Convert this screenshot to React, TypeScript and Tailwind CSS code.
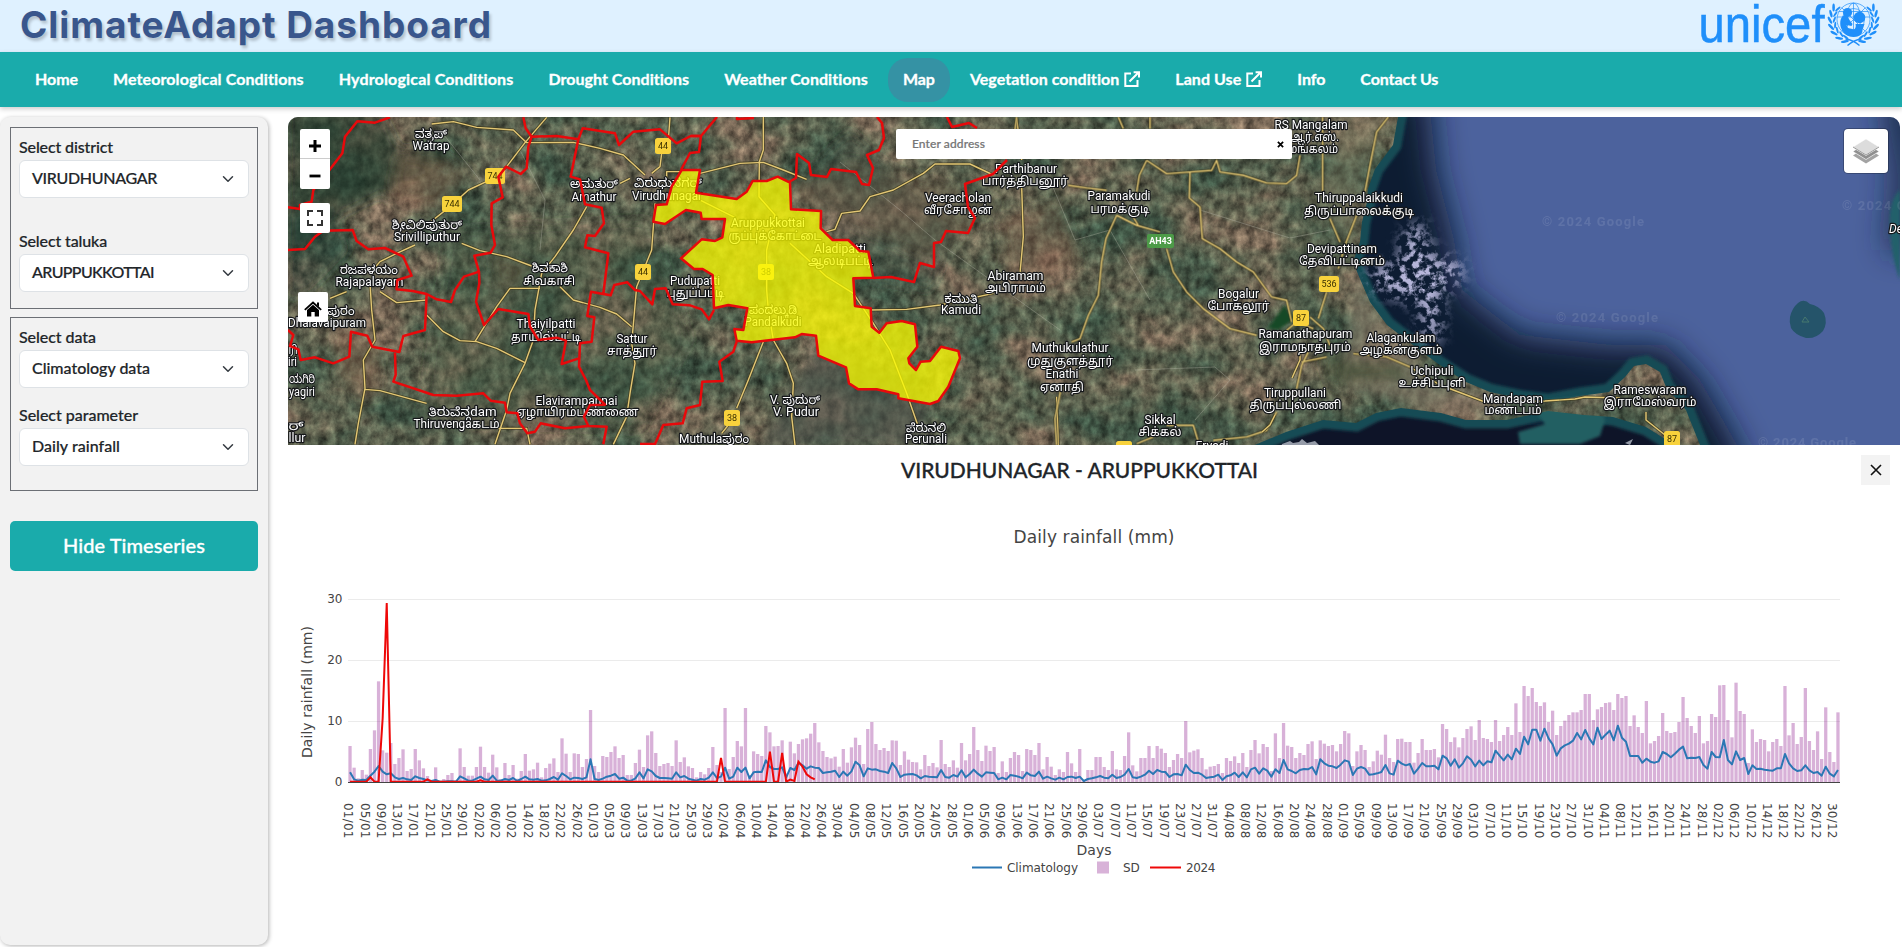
import { useLayoutEffect, useRef, type ReactNode } from "react";

/* Text set to a fixed measure by adjusting its tracking. */
function Fit({ w, children, className = "" }: { w: number; children: string; className?: string }) {
  const ref = useRef<HTMLSpanElement>(null);
  useLayoutEffect(() => {
    const el = ref.current;
    if (!el) return;
    el.style.letterSpacing = "0px";
    const natural = el.getBoundingClientRect().width;
    el.style.letterSpacing = `${(w - natural) / children.length}px`;
  }, [w, children]);
  return (
    <span ref={ref} className={`inline-block whitespace-nowrap ${className}`}>
      {children}
    </span>
  );
}

function ExternalIcon() {
  return (
    <svg viewBox="0 0 16 16" className="ml-[5px] mt-px h-[16px] w-[16px]" fill="none" stroke="currentColor" strokeWidth="2">
      <path d="M7 2.5H1.3V15H13.5V9" />
      <path d="M5.5 10.5 14 2M9.6 1.2H15V6.6" />
    </svg>
  );
}

const nav = [
  { t: "Home", w: 43 },
  { t: "Meteorological Conditions", w: 191 },
  { t: "Hydrological Conditions", w: 175 },
  { t: "Drought Conditions", w: 141 },
  { t: "Weather Conditions", w: 144 },
  { t: "Map", w: 32, active: true },
  { t: "Vegetation condition", w: 150, ext: true },
  { t: "Land Use", w: 66, ext: true },
  { t: "Info", w: 28 },
  { t: "Contact Us", w: 78 },
];

function Laurel() {
  const leaves = [
    [-8, 18, 72], [-13, 15, 52], [-17.5, 10.5, 34], [-20, 5, 16], [-21, -1, 0], [-20, -7, -14], [-17.5, -12.5, -28],
  ];
  return (
    <g>
      {leaves.map(([x, y, r], i) => (
        <g key={i} transform={`translate(${x} ${y}) rotate(${-r})`}>
          <ellipse cx="-2.4" cy="-1" rx="1.3" ry="4" transform="rotate(-28)" />
          <ellipse cx="1.6" cy="-1" rx="1" ry="3.4" transform="rotate(20)" />
        </g>
      ))}
    </g>
  );
}

function UnicefLogo() {
  return (
    <svg viewBox="1690 0 210 52" className="h-[52px] w-[210px]" fill="#1f8ffa">
      <text
        x="1698.500"
        y="41.500"
        fontSize="52"
        stroke="#1f8ffa"
        strokeWidth=".5"
        textLength="126"
        lengthAdjust="spacingAndGlyphs"
        className="font-['Liberation_Sans']"
      >
        unicef
      </text>
      <g transform="translate(1853.500 21)">
        <g fill="none" stroke="#1f8ffa" strokeWidth=".7">
          <circle r="16.500" cy="-1.500" />
          <circle r="11" cy="-1.500" />
          <ellipse rx="7" ry="16.500" cy="-1.500" />
          <path d="M0-18V15M-17-4H17M-15-9.500H15M-12-13.500 12 10.500M12-13.500-12 10.500" />
        </g>
        <circle cx="-6" cy="-8.500" r="4.600" />
        <circle cx="6" cy="-3.500" r="5.800" />
        <path d="M-9-6C-14-4-14 4-12 8c2 5 7 8 12 8 6 0 9-3 9-7l2-6H2C3 7 1 9-1 8l-5-1-1-3 5 1 1-2-3-4-2-4Z" />
        <Laurel />
        <g transform="scale(-1 1)"><Laurel /></g>
        <path d="M-8 18Q0 19 6 24.500M8 18Q0 19-6 24.500" fill="none" stroke="#1f8ffa" strokeWidth="1.400" />
      </g>
    </svg>
  );
}

function Header() {
  return (
    <header className="flex h-[52px] shrink-0 items-center justify-between bg-[#dff1ff] pl-5 pr-[2px]">
      <h1 className="-mt-[4px] font-['Inter'] text-[37px] font-bold leading-none text-[#39568c] [text-shadow:2px_3px_3px_rgba(0,0,0,0.2)]">
        <Fit w={472}>ClimateAdapt Dashboard</Fit>
      </h1>
      <UnicefLogo />
    </header>
  );
}

function Nav() {
  return (
    <nav className="flex h-[55px] shrink-0 items-center gap-[5px] bg-[#1aabab] pl-5 text-[16px] font-bold text-white shadow-[0_2px_5px_rgba(0,0,0,0.2)]">
      {nav.map((n) => (
        <a key={n.t} className={`flex h-11 items-center rounded-[20px] px-[15px] pb-[2px] ${n.active ? "bg-[#3592a4]" : ""}`}>
          <Fit w={n.w} className="[-webkit-text-stroke:0.3px_white]">{n.t}</Fit>
          {n.ext && <ExternalIcon />}
        </a>
      ))}
    </nav>
  );
}

function Field({ label, lw, value, vw }: { label: string; lw: number; value: string; vw: number }) {
  return (
    <div className="flex flex-col">
      <div className="flex h-[27px] items-center text-[16px] font-medium"><Fit w={lw}>{label}</Fit></div>
      <div className="flex h-[38px] items-center justify-between rounded-md border border-[#dee2e6] bg-white pb-[2px] pl-3 pr-[14px] text-[16px] font-medium">
        <Fit w={vw}>{value}</Fit>
        <svg viewBox="0 0 16 16" className="mt-px h-3 w-3" fill="none" stroke="#343a40" strokeWidth="2" strokeLinecap="round" strokeLinejoin="round">
          <path d="m2 5 6 6 6-6" />
        </svg>
      </div>
    </div>
  );
}

function Sidebar() {
  return (
    <aside className="flex h-[828px] w-[268px] shrink-0 flex-col rounded-[10px] bg-[#f2f2f2] px-[10px] pt-[10px] text-[#212529] shadow-[1px_1px_4px_rgba(0,0,0,0.3)]">
      <section className="flex h-[182px] flex-col gap-[29px] border border-[#6c6f75] px-2 pt-[5px] [-webkit-text-stroke:0.2px_#212529]">
        <Field label="Select district" lw={94} value="VIRUDHUNAGAR" vw={125} />
        <Field label="Select taluka" lw={88} value="ARUPPUKKOTTAI" vw={122} />
      </section>
      <section className="mt-2 flex h-[174px] flex-col gap-[13px] border border-[#6c6f75] px-2 pt-[5px] [-webkit-text-stroke:0.2px_#212529]">
        <Field label="Select data" lw={77} value="Climatology data" vw={118} />
        <Field label="Select parameter" lw={119} value="Daily rainfall" vw={88} />
      </section>
      <button className="mt-[30px] flex h-[50px] items-center justify-center rounded-[5px] bg-[#1aabab] pb-[3px] text-[20px] font-medium text-white [-webkit-text-stroke:0.3px_white]">
        <Fit w={142}>Hide Timeseries</Fit>
      </button>
    </aside>
  );
}

/* ---------- Map ---------- */

type Label = [string, number, number, number];
const labels: Label[] = [
  ["ವತ್ರಪ್", 431, 133.5, 32], ["Watrap", 431, 146, 37],
  ["ಅಮತುರ್", 594, 184, 48], ["Amathur", 594, 196.5, 45],
  ["ವಿರುಧುನಗರ್", 668, 183, 68], ["Virudhunagar", 667, 196, 70],
  ["ಶ್ರೀವಿಲಿಪುತುರ್", 427, 225, 70], ["Srivilliputhur", 427, 236.5, 66],
  ["ರಜಪಳಯಂ", 369, 270, 58], ["Rajapalayam", 369.5, 281.5, 68],
  ["ಶಿವಕಾಶಿ", 550, 268, 36], ["சிவகாசி", 549, 281, 52],
  ["ಪುರಂ", 341, 311, 27], ["Dhalavaipuram", 327, 322.5, 78],
  ["Thaiyilpatti", 546, 324, 59], ["தாயில்பட்டி", 546, 336.5, 70],
  ["Sattur", 632, 338.5, 31], ["சாத்தூர்", 632, 350.5, 50],
  ["ரி", 293, 350, 9], ["iri", 292.5, 361.5, 9],
  ["ಯಗಿರಿ", 302, 379, 26], ["yagiri", 302, 391.5, 26],
  ["ತಿರುವೆನ್ಗdam", 462.5, 411.5, 68], ["Thiruvengaகடம்", 456.5, 423.5, 86],
  ["Elavirampannai", 576.5, 400.5, 82], ["ஏழாயிரம்பண்ணை", 577.5, 412, 122],
  ["ರ್", 296, 426, 15], ["llur", 297, 438, 17], ["Muthulaಪುರಂ", 714, 439, 70],
  ["Pudupatti", 695, 281, 50], ["புதுப்பட்டி", 695.5, 293, 58],
  ["Aruppukkottai", 768, 223, 74], ["ருப்புக்கோட்டை", 775, 235.5, 93],
  ["Aladipatti", 840, 249, 52], ["ஆலடிபட்டி", 840.5, 261, 65],
  ["ಪಂದಲ್ಕುಡಿ", 773, 310, 48], ["Pandalkudi", 773, 322, 57],
  ["V. ಪುದುರ್", 795, 400, 50], ["V. Pudur", 796, 412, 46],
  ["ಪೆರುನಲಿ", 926, 428, 40], ["Perunali", 926, 439, 42],
  ["ಕಮುತಿ", 961, 299, 33], ["Kamudi", 961, 310, 40],
  ["Veeracholan", 958, 198, 66], ["வீரசோழன்", 958, 210, 68],
  ["Parthibanur", 1026, 169, 62], ["பார்த்திபனூர்", 1025, 181, 86],
  ["Abiramam", 1015.5, 276, 56], ["அபிராமம்", 1015.5, 288, 61],
  ["Paramakudi", 1119, 196, 63], ["பரமக்குடி", 1120, 208.5, 59],
  ["RS Mangalam", 1311, 125, 73], ["ஆர்.எஸ்.", 1315, 137, 48], ["மங்கலம்", 1313, 148.5, 50],
  ["Thiruppalaikkudi", 1359, 198, 88], ["திருப்பாலைக்குடி", 1359, 211, 110],
  ["Devipattinam", 1342, 249, 70], ["தேவிபட்டினம்", 1342, 261, 86],
  ["Bogalur", 1238.5, 294, 41], ["போகலூர்", 1238.5, 306, 62],
  ["Ramanathapuram", 1305.5, 334, 94], ["இராமநாதபுரம்", 1305, 346.5, 92],
  ["Alagankulam", 1401, 338, 69], ["அழகன்குளம்", 1401, 350, 83],
  ["Uchipuli", 1432, 371, 43], ["உச்சிப்புளி", 1432, 383, 67],
  ["Mandapam", 1513, 398.5, 60], ["மண்டபம்", 1513, 410, 57],
  ["Rameswaram", 1650, 390, 73], ["இராமேஸ்வரம்", 1650, 402, 93],
  ["Tiruppullani", 1295, 393, 62], ["திருப்புல்லணி", 1295.5, 405, 92],
  ["Muthukulathur", 1070, 348, 77], ["முதுகுளத்தூர்", 1070, 360.5, 86],
  ["Enathi", 1062, 374, 33], ["ஏனாதி", 1062, 386.5, 44],
  ["Sikkal", 1160, 420, 31], ["சிக்கல்", 1160, 432, 43], ["Ervadi", 1212, 446, 33],
];

const shields: [string, number, number][] = [
  ["744", 495, 176], ["744", 452, 204], ["44", 663, 146], ["44", 643, 272], ["38", 766, 272],
  ["38", 732, 418], ["536", 1329, 284], ["87", 1301, 318], ["87", 1672, 439], ["", 1124, 449],
];

const T5 = "translate(280 110) scale(.33333)";
const T6 = "translate(640 150) scale(.33333)";
const T12 = "translate(1000 112) scale(.33333)";

const roadsWest =
  "M455 42 520 35 590 52 700 60 740 98 880 97 960 115 1030 135 1095 195M800 22 735 98 680 170 640 205 565 240 510 290 440 345M405 405 350 430 300 455 270 490M545 400 600 422 680 440 755 468M920 290 880 360 825 440 785 490 765 600 760 690 735 760 690 850 680 900 645 1003M840 530 880 570 960 592 1010 612 1055 650M270 520 275 600 285 690 250 750 255 835 235 940 225 1003M300 545 350 578 440 570M440 615 490 665 540 692 590 695 650 715 735 758M255 838 300 842 440 880M780 535 690 535 650 590 585 695M1170 22 1165 90M1145 130 1140 170 1115 190M1125 280 1115 420 1070 530 1055 700 1065 760 1050 850 1040 920 1000 1003M655 955 740 955 750 1003M150 565 200 545M1160 215V185H1200M1020 220 1050 205";
const roadsMid =
  "M370-100 370 0 358 35 357 140 405 195 380 300 380 420 385 480 400 570 440 640 460 700 455 800 465 885M180 70 240 55 300 40 370 37 430 60 500 88M370 575 325 690 290 775M265 825 245 850M560 245 585 238 605 190 660 183 690 140 760 120 850 70 885 42 990 42 1060 75M450 280 560 380 640 430 700 520 750 600 800 730 835 830M170 145 290 205M690 480 800 478 900 465 1060 430M1145 110 1150 260 1140 370M1145 30 1130-95M1250 740 1255 885";
const roadsEast =
  "M50 15 45 55M355 15 370 50M450 15V50M440 145 500 185 570 180 635 175 650 145 660 180 730 190 800 213 860 215 890 190 900 130M440 145 418 190 410 240M570 180 568 258 600 285 607 380 660 410 710 450 760 480 815 555 860 565 875 630M205 220 260 228 320 235M350 310 410 340 480 360M390 300 415 340M350 310 318 380 305 450 295 550 265 610 240 680 215 690M182 835 165 920 170 999M500 410 520 480 560 540 610 590 690 650 770 670M968 15V240M990 320 1020 390M1165 15 1130 60 1110 160 1095 240M1070 310 1035 400 1015 470M980 540 955 620M930 615 970 650 990 700M940 650 890 630 860 655M925 720 905 760 890 830M830 900 800 955 740 975 640 985M410 995 460 975M500 940H580L595 990M905 750 980 735M1060 725 1160 735 1230 765";
const roadsSea =
  "M1410 367 1440 385 1485 402 1545 401 1575 399 1585 397 1620 398M1646 412V420L1665 435M1300 348V360L1292 378M1275 415 1270 425 1262 432";

const land =
  "M280 100H1402L1398 117 1393 145 1375 169 1368 189 1367 202 1362 222 1360 242 1353 262 1360 279 1370 302 1387 325 1413 345 1437 363 1466 382 1490 392 1523 399 1548 402 1580 396 1609 392 1625 377 1634 366 1646 364 1660 372 1666 387 1686 410 1700 445 1690 450 1670 442 1646 427 1613 417 1584 415 1548 411 1507 420 1466 420 1441 413 1401 408 1376 413 1356 423 1323 420 1286 432 1250 447 280 450Z";

function Roads() {
  const all: [string, string | undefined, number][] = [
    [roadsWest, T5, 3], [roadsMid, T6, 3], [roadsEast, T12, 3], [roadsSea, undefined, 1],
  ];
  return (
    <g fill="none" strokeLinejoin="round">
      {all.map(([d, t, k], i) => (
        <g key={i} transform={t}>
          <path d={d} stroke="#3f3b20" strokeWidth={3 * k} opacity=".8" />
          <path d={d} stroke="#e3c774" strokeWidth={1.4 * k} />
        </g>
      ))}
    </g>
  );
}

function Boundaries() {
  return (
    <g fill="none" stroke="#e8090b" strokeLinejoin="round">
      <g transform={T5} strokeWidth="7.5">
        <path d="M330 22 285 38 232 34 195 80 187 130 150 178 100 240 95 275 60 285V297L24 292" />
        <path d="M24 420 75 417 105 380 130 362 218 360 230 393 265 418 315 414 370 440 395 497 352 510 350 538 398 543 440 552 470 568 513 576 525 540 552 500 597 485" />
        <path d="M730 22 737 55 755 80 745 110 740 175 722 192 678 170 655 200 668 262 635 280 634 345 645 405 632 428 583 437 597 485 598 520 588 575 612 645 655 597 745 612 750 650 775 690 830 683 858 692 845 762 897 745" />
        <path d="M755 80 830 78 895 88 908 55 1005 70 1017 105 1060 65 1140 58 1190 100 1232 78 1260 78" />
        <path d="M895 88 872 200 900 208 915 283 965 293 972 340 945 378 922 376 915 412 985 430 970 552 933 545 922 618 943 622 935 695 900 700 897 770 918 810 930 840 975 884 930 885 912 920 925 948 980 950 970 1003" />
        <path d="M970 552 992 556 1003 525 1042 517 1065 540 1080 543 1117 583 1125 537 1157 535 1178 583 1230 586 1265 598 1287 628 1302 600" />
        <path d="M440 552 435 660 370 678 358 726 277 710 262 677 213 665 208 740 160 760 105 742 62 750 55 718 30 708 40 675 24 660" />
        <path d="M345 728 347 795 340 815 460 855 530 857 610 850 632 872 675 878 680 907 712 910 720 940 742 970 765 965 782 940 855 955 925 948" />
      </g>
      <path transform={T6} strokeWidth="7.5" d="M0 882H45L70 825 128 820 140 775 180 765 187 695 248 693 238 635 280 605 290 575" />
      <g strokeWidth="2.5">
        <path d="M717 117 701 136 699 152 690 153 681 170M691 136H701M737 117V119L754 118" />
        <path d="M877 117 882 123 884 138 879 150 867 155 873 168 869 185 862 184 856 172 831 169 827 177 811 175 809 163 797 154 796 178 789 182" />
        <path d="M947 117 952 127 969 123 977 128" />
        <path d="M1007 160 993 174 965 184 968 207 975 218 968 233 946 231 941 242 934 243V267L920 263 914 282 891 277 873 278" />
      </g>
      <path
        transform={T6}
        strokeWidth="7.5"
        fill="#fafc00"
        fillOpacity=".76"
        d="M125 60H180L168 128 290 147 320 125 338 93H380L413 80 450 98 453 178 543 183 542 235 578 270H625L660 303 685 305 700 383 640 385 645 468 692 475 695 530 718 548 740 520 785 513 825 523 832 590 805 625 808 640 828 660 842 635 870 633 903 590 955 603 960 625 925 710 895 753 870 762 775 745V733L710 718H655L627 700 618 652 535 617 528 557 485 552 465 562 335 577 290 572 283 537 310 540 322 475 265 465 222 475 218 375 188 357H162L123 325 185 268 225 273 247 262 255 207H185L182 188 138 180 75 222 40 215 48 165 80 163 95 110Z"
      />
    </g>
  );
}

function SatelliteMap() {
  return (
    <svg viewBox="288 117 1612 328" className="h-full w-full">
      <defs>
        <filter id="ground" x="0" y="0" width="100%" height="100%" colorInterpolationFilters="sRGB">
          <feTurbulence type="fractalNoise" baseFrequency="0.014 0.02" numOctaves="6" seed="23" />
          <feColorMatrix values="2 0 0 0 -.5  2 0 0 0 -.5  2 0 0 0 -.5  0 0 0 0 1" />
          <feComponentTransfer result="tone">
            <feFuncR type="table" tableValues=".25 .31 .37 .43 .49" />
            <feFuncG type="table" tableValues=".33 .365 .39 .41 .42" />
            <feFuncB type="table" tableValues=".27 .295 .315 .335 .35" />
          </feComponentTransfer>
          <feTurbulence type="fractalNoise" baseFrequency="0.11 0.09" numOctaves="5" seed="4" />
          <feColorMatrix values=".65 0 0 0 .16  .65 0 0 0 .16  .65 0 0 0 .16  0 0 0 0 1" result="grain" />
          <feBlend in="grain" in2="tone" mode="overlay" />
          <feComposite in2="SourceGraphic" operator="in" />
        </filter>
        <filter id="clouds" x="0" y="0" width="100%" height="100%" colorInterpolationFilters="sRGB">
          <feGaussianBlur in="SourceGraphic" stdDeviation="8" result="soft" />
          <feTurbulence type="fractalNoise" baseFrequency="0.13" numOctaves="5" seed="8" />
          <feColorMatrix values="0 0 0 0 .72  0 0 0 0 .72  0 0 0 0 .86  5 0 0 0 -2.200" />
          <feComposite in2="soft" operator="in" />
        </filter>
        <filter id="b4"><feGaussianBlur stdDeviation="6" /></filter>
        <filter id="b1"><feGaussianBlur stdDeviation="1.5" /></filter>
        <filter id="b20" x="-30%" y="-30%" width="160%" height="160%"><feGaussianBlur stdDeviation="16" /></filter>
        <clipPath id="landClip"><path d={land} /></clipPath>
      </defs>

      <rect x="1200" y="117" width="700" height="328" fill="#4c629d" />
      <g filter="url(#b20)">
        <path d="M1340 90H1428L1436 170 1454 240 1462 290 1520 335 1610 345 1665 345 1700 380 1740 450 1750 500H1240Z" fill="#101a30" />
        <path d="M1884 90H1920V250L1888 250 1896 180Z" fill="#17263f" />
      </g>
      <path d="M1200 440 1330 425 1400 412 1520 425 1640 425 1680 460H1200Z" fill="#0e1428" />
      <path d={land} fill="none" stroke="#154c55" strokeWidth="17" filter="url(#b1)" />
      <path d="M1530 405 1545 400 1595 395 1605 420 1600 436 1580 444H1520L1518 432 1545 424Z" fill="#215e62" filter="url(#b1)" />
      <path d="M1790 317q2-9 8-14 6-5 12 1 9 2 14 9 4 10-1 18-7 8-17 7-11-3-15-10-2-6-1-11Z" fill="#25546a" />
      <path d="M1802 322l3-5 4 5z" fill="none" stroke="#47786f" />
      <path d="M1900 190q-12 10-10 40t10 50Z" fill="#22606a" filter="url(#b1)" />

      <g clipPath="url(#landClip)">
        <rect x="280" y="110" width="1450" height="345" fill="#556050" filter="url(#ground)" />
        <g filter="url(#b4)">
          <path d="M288 110 380 110 400 150 440 145 455 160 400 185 340 215 288 260Z" fill="#1d362c" opacity=".55" />
          <path d="M288 215 330 205 350 250 310 290 288 300Z" fill="#1d362c" opacity=".4" />
          <path d="M400 155 470 170 440 210 390 200Z M335 330 380 340 375 400 340 380Z M490 255 540 270 500 290Z" fill="#94674d" opacity=".35" />
          <path d="M450 230 650 220 690 340 640 430 420 420Z" fill="#3f5541" opacity=".3" />
          <path d="M780 190 850 160 1000 200 930 260ZM1000 220 1060 200 1080 260 1010 300Z" fill="#94674d" opacity=".3" />
          <path d="M820 340 930 400 920 445H760Z" fill="#4b524b" opacity=".6" />
          <path d="M850 130 960 230 930 290 870 280 800 180Z" fill="#3c4a40" opacity=".3" />
          <path d="M1355 270 1390 335 1440 385 1530 405 1440 412 1340 385Z" fill="#928472" opacity=".5" />
          <path d="M1345 110H1395L1360 190 1350 250 1310 200Z" fill="#8b8168" opacity=".35" />
          <path d="M1320 355 1400 362 1410 380 1330 385Z" fill="#3a4a34" opacity=".6" />
        </g>
        <path d="M1268 328 1285 305 1293 320 1278 330Z" fill="#154a25" filter="url(#b1)" />
        <path d="M840 162 900 210 935 240 1060 330M1050 180 1075 240 1110 230 1150 300M1200 210 1290 238 1330 230M520 150 545 200 540 250M1135 370 1215 367 1230 380 1195 420M440 130 480 180" fill="none" stroke="#b9b9ad" strokeWidth=".7" opacity=".5" />
      </g>

      <g fill="#fff" filter="url(#clouds)">
        <path d="M1330 200H1480V370H1330Z" fill="none" />
        <path d="M1368 268 1400 262 1404 230 1424 222 1432 255 1462 262 1462 282 1442 290 1440 340 1425 345 1418 304 1374 290Z" />
      </g>
      <path d="M1282 444l8-3 3 2 6-1 3-3 5 4 8-2 4 4v2h-38zM1625 443l8-4-3 6z" fill="#cfd4de" opacity=".7" />

      <Roads />

      <g fontSize="9" textAnchor="middle" className="font-['Roboto']">
        {shields.map(([t, x, y], i) => (
          <g key={i}>
            <rect x={x - (t.length === 3 ? 10 : 8)} y={y - 8} width={t.length === 3 ? 20 : 16} height="16" rx="2.5" fill="#f8d23c" />
            <text x={x} y={y + 3.3} fill="#3a3000">{t}</text>
          </g>
        ))}
        <rect x="1147" y="234" width="27" height="14" rx="2" fill="#4d9b48" />
        <text x="1160.500" y="244.300" fill="#fff" fontWeight="700">AH43</text>
      </g>

      <g
        fontSize="12"
        textAnchor="middle"
        fill="#fff"
        stroke="#15171a"
        strokeWidth="2.4"
        strokeLinejoin="round"
        paintOrder="stroke"
        className="font-['Roboto','Noto_Sans_Tamil','Noto_Sans_Kannada','Noto_Sans',sans-serif]"
      >
        {labels.map(([t, x, y, w], i) => (
          <text key={i} x={x} y={y + 4} textLength={w} lengthAdjust="spacingAndGlyphs">{t}</text>
        ))}
        <text x="1896" y="233" fontStyle="italic">De</text>
      </g>
      <g fontSize="13" fontWeight="700" fill="#fff" opacity=".1" className="font-['Roboto']">
        <text x="1542" y="225.500" textLength="102">© 2024 Google</text>
        <text x="1556" y="321.500" textLength="102">© 2024 Google</text>
        <text x="1842" y="209.500" textLength="102">© 2024 Google</text>
        <text x="1758" y="447" textLength="98">© 2024 Google</text>
      </g>

      <Boundaries />
    </svg>
  );
}

function Control({ className, children }: { className: string; children: ReactNode }) {
  return <div className={`absolute flex items-center justify-center rounded-[2px] bg-white ${className}`}>{children}</div>;
}

function MapPanel() {
  return (
    <div className="relative h-[328px] overflow-hidden rounded-t-[10px]">
      <SatelliteMap />
      <div className="absolute left-3 top-3 flex h-[60px] w-[30px] flex-col rounded-[2px] bg-white">
        <span className="flex h-[30px] items-center justify-center border-b border-[#ccc] pt-1">
          <svg viewBox="0 0 12 12" className="h-3 w-3"><path d="M6 0v12M0 6h12" stroke="#000" strokeWidth="3" /></svg>
        </span>
        <span className="flex h-[30px] items-center justify-center pt-1">
          <svg viewBox="0 0 12 12" className="h-3 w-3"><path d="M.5 6h11" stroke="#000" strokeWidth="2.8" /></svg>
        </span>
      </div>
      <Control className="left-3 top-[86px] h-[30px] w-[30px]">
        <svg viewBox="0 0 16 16" className="h-4 w-4" fill="none" stroke="#333" strokeWidth="2">
          <path d="M1 6V1H6M10 1H15V6M15 10V15H10M6 15H1V10" />
        </svg>
      </Control>
      <Control className="left-[10px] top-[175px] h-[30px] w-[30px] pt-1">
        <svg viewBox="0 0 18 16" className="h-4 w-[18px]">
          <path d="M.8 8.800 9 1.500 17.200 8.800" fill="none" stroke="#000" strokeWidth="1.800" />
          <path d="M3 9 9 3.700 15 9V15.500H10.700V11H7.300V15.500H3ZM13 1.500H15V6L13 4.200Z" />
        </svg>
      </Control>
      <Control className="left-[608px] top-3 h-[30px] w-[396px] justify-between! pl-4 pr-2">
        <span className="text-[12px] font-medium text-[#757575] [-webkit-text-stroke:0.2px_#757575]"><Fit w={73}>Enter address</Fit></span>
        <svg viewBox="0 0 8 8" className="h-[7px] w-[7px]"><path d="m1 1 6 6M7 1 1 7" stroke="#000" strokeWidth="2" /></svg>
      </Control>
      <Control className="right-3 top-3 h-11 w-11 rounded-[4px] shadow-[0_0_0_1px_rgba(0,0,0,0.25)]">
        <svg viewBox="0 0 26 26" className="h-[26px] w-[26px]">
          <path d="M0 17.500 13 25.500 26 17.500 23 15.500 13 21.500 3 15.500Z" fill="#a3a3a3" />
          <path d="M0 13.500 13 21.500 26 13.500 23 11.500 13 17.500 3 11.500Z" fill="#8f8f8f" stroke="#fff" strokeWidth=".5" />
          <path d="M0 9 13 1 26 9 13 17Z" fill="#dcdcdc" stroke="#fff" strokeWidth=".5" />
          <path d="M0 9 13 17 26 9" fill="none" stroke="#9a9a9a" />
        </svg>
      </Control>
    </div>
  );
}

/* ---------- Chart: ordinates are in thirds of a pixel, 606 being zero ---------- */

const sd = [
  498, 563, 595, 570, 584, 507, 451, 304, 511, 518, 489, 552, 534, 508, 573, 567, 507, 541, 565, 588,
  600, 562, 603, 597, 585, 579, 602, 505, 561, 587, 587, 561, 500, 561, 578, 524, 562, 597, 549, 585,
  555, 596, 573, 522, 572, 568, 548, 592, 564, 551, 535, 576, 475, 521, 576, 520, 522, 561, 537, 390,
  558, 576, 528, 531, 516, 499, 534, 525, 585, 585, 549, 509, 561, 466, 454, 519, 558, 552, 549, 558,
  481, 546, 532, 559, 564, 592, 576, 583, 564, 501, 555, 576, 384, 567, 531, 483, 499, 384, 585, 514,
  522, 528, 438, 457, 499, 498, 481, 580, 485, 520, 492, 478, 475, 461, 429, 487, 513, 531, 535, 530,
  560, 507, 548, 502, 473, 495, 552, 447, 426, 492, 510, 504, 513, 481, 482, 555, 514, 539, 546, 547,
  568, 525, 558, 549, 562, 480, 552, 561, 541, 563, 489, 541, 522, 441, 510, 543, 497, 513, 501, 579,
  544, 576, 534, 516, 525, 573, 507, 510, 525, 489, 568, 531, 560, 585, 568, 576, 516, 550, 576, 507,
  601, 570, 570, 531, 531, 561, 570, 513, 568, 570, 528, 457, 556, 574, 534, 534, 498, 534, 498, 506,
  519, 561, 540, 522, 534, 423, 517, 512, 508, 534, 568, 560, 558, 552, 579, 534, 543, 529, 549, 519,
  561, 510, 480, 520, 492, 501, 573, 460, 534, 429, 497, 501, 534, 519, 525, 492, 484, 537, 481, 491,
  498, 495, 514, 492, 453, 460, 558, 514, 495, 510, 561, 544, 512, 524, 464, 534, 546, 477, 476, 486,
  486, 548, 519, 477, 510, 510, 507, 532, 432, 447, 486, 472, 502, 474, 447, 439, 480, 420, 474, 477,
  486, 420, 483, 465, 441, 465, 370, 456, 318, 348, 324, 366, 378, 367, 426, 392, 465, 438, 422, 405,
  397, 397, 390, 342, 342, 420, 388, 381, 369, 367, 390, 342, 354, 348, 438, 406, 441, 459, 363, 490,
  483, 468, 399, 453, 459, 456, 426, 351, 414, 438, 459, 408, 490, 483, 402, 411, 316, 315, 420, 472,
  308, 393, 402, 549, 448, 486, 477, 480, 514, 486, 477, 498, 318, 466, 429, 492, 471, 324, 483, 510,
  454, 537, 382, 516, 546, 397,
];

const climatology = [
  577, 598, 602, 599, 600, 587, 575, 558, 575, 583, 580, 592, 597, 594, 598, 600, 589, 594, 597, 601,
  603, 600, 605, 605, 604, 604, 605, 589, 595, 602, 602, 596, 590, 598, 600, 587, 602, 602, 597, 600,
  594, 603, 597, 590, 598, 599, 597, 602, 601, 597, 591, 599, 580, 588, 598, 593, 594, 597, 592, 538,
  597, 600, 596, 590, 587, 582, 596, 593, 602, 602, 595, 577, 595, 568, 574, 588, 594, 594, 595, 596,
  577, 592, 588, 596, 599, 602, 597, 599, 593, 577, 594, 590, 563, 596, 590, 563, 576, 563, 595, 577,
  575, 576, 541, 561, 567, 567, 562, 592, 564, 570, 548, 556, 566, 559, 563, 564, 579, 577, 575, 572,
  591, 575, 587, 574, 545, 556, 589, 565, 569, 568, 573, 575, 579, 549, 565, 591, 584, 583, 582, 586,
  595, 588, 590, 591, 592, 570, 591, 593, 585, 590, 571, 592, 582, 569, 581, 590, 577, 578, 579, 598,
  593, 598, 585, 587, 590, 595, 578, 586, 588, 575, 596, 590, 595, 599, 593, 598, 591, 590, 594, 590,
  603, 597, 595, 592, 588, 593, 595, 584, 594, 591, 584, 567, 592, 594, 590, 584, 572, 582, 570, 575,
  576, 591, 583, 582, 586, 554, 570, 579, 578, 584, 594, 592, 590, 584, 600, 589, 586, 578, 591, 577,
  592, 568, 563, 581, 565, 572, 590, 568, 579, 540, 568, 573, 580, 570, 567, 568, 561, 583, 538, 550,
  557, 559, 564, 554, 541, 545, 585, 566, 561, 566, 584, 583, 580, 576, 555, 580, 584, 542, 551, 556,
  552, 581, 566, 549, 559, 559, 557, 568, 527, 535, 557, 538, 563, 550, 529, 539, 559, 542, 556, 544,
  547, 512, 527, 541, 524, 538, 506, 522, 470, 493, 449, 449, 482, 446, 475, 493, 527, 505, 496, 491,
  482, 459, 478, 450, 475, 493, 443, 477, 464, 452, 481, 437, 473, 485, 528, 528, 528, 548, 536, 545,
  548, 544, 516, 522, 532, 521, 509, 500, 535, 533, 534, 531, 555, 566, 516, 531, 532, 480, 540, 553,
  514, 540, 534, 582, 556, 567, 566, 569, 571, 572, 565, 565, 522, 550, 565, 573, 571, 556, 571, 579,
  576, 587, 560, 581, 589, 570,
];

const rain2024: Record<number, number> = {
  5: 592, 8: 415, 9: 69, 19: 598, 32: 601, 91: 534, 103: 515, 106: 519, 108: 599, 109: 603,
  110: 545, 111: 560, 112: 583, 113: 592, 114: 598,
};
const current = Array.from({ length: 115 }, (_, i) => rain2024[i] ?? 605);

const STEP = 1492 / 366;
const cx = (i: number) => 348 + (i + 0.5) * STEP;
const cy = (v: number) => 580 + v / 3;
const points = (a: number[]) => a.map((v, i) => `${cx(i).toFixed(2)},${cy(v).toFixed(2)}`).join(" ");
const two = (n: number) => String(n).padStart(2, "0");
const ticks = Array.from({ length: 92 }, (_, k) => {
  const d = new Date(Date.UTC(2024, 0, 1 + k * 4));
  return `${two(d.getUTCDate())}/${two(d.getUTCMonth() + 1)}`;
});

function Chart() {
  return (
    <svg viewBox="288 500 1612 400" className="h-[400px] w-full font-['DejaVu_Sans']" fill="#444">
      <text x="1094" y="542.500" fontSize="17" textAnchor="middle" textLength="161">Daily rainfall (mm)</text>
      {[30, 20, 10, 0].map((v) => {
        const y = 782 - v * 6.09;
        return (
          <g key={v}>
            <path d={`M348 ${Math.round(y) + 0.5}H1840`} stroke="#ebebeb" />
            <text x="342.500" y={y + 4} fontSize="12" textAnchor="end">{v}</text>
          </g>
        );
      })}
      <text transform="translate(311.500 692) rotate(-90)" fontSize="14" textAnchor="middle" textLength="132">Daily rainfall (mm)</text>
      <g fill="#800080" opacity=".3">
        {sd.map((v, i) => (
          <rect key={i} x={cx(i) - 1.65} width="3.3" y={cy(v)} height={782 - cy(v)} />
        ))}
      </g>
      <g fill="none" strokeWidth="2" strokeLinejoin="round">
        <polyline points={points(climatology)} stroke="#2b77b4" />
        <polyline points={points(current)} stroke="#ee0808" strokeLinejoin="miter" />
      </g>
      <path d="M348 782.500H1840" stroke="#444" />
      <g fontSize="12">
        {ticks.map((t, k) => (
          <text key={t} textLength="35.500" transform={`translate(${(cx(k * 4) - 5.8).toFixed(2)} 803) rotate(90)`}>{t}</text>
        ))}
      </g>
      <text x="1094" y="855" fontSize="14" textAnchor="middle">Days</text>
      <g fontSize="12">
        <path d="M972 867.500H1002" stroke="#2b77b4" strokeWidth="2" />
        <text x="1007" y="871.500" textLength="71">Climatology</text>
        <rect x="1097" y="861.500" width="12" height="12" fill="#d8b2d8" />
        <text x="1123" y="871.500">SD</text>
        <path d="M1150 867.500H1181" stroke="#ee0808" strokeWidth="2" />
        <text x="1186" y="871.500" textLength="29.500">2024</text>
      </g>
    </svg>
  );
}

export default function App() {
  return (
    <div className="flex h-[947px] w-full flex-col overflow-hidden bg-white font-['Lato']">
      <Header />
      <Nav />
      <div className="flex pt-[10px]">
        <Sidebar />
        <main className="ml-5 mr-[2px] flex min-w-0 flex-1 flex-col">
          <MapPanel />
          <div className="flex h-[55px] items-center pl-[10px] pr-[10px]">
            <h2 className="-mt-[5px] flex-1 pl-[28px] text-center text-[21px] font-medium text-[#212529] [-webkit-text-stroke:0.3px_#212529]">
              <span className="-ml-[28px]"><Fit w={357}>VIRUDHUNAGAR - ARUPPUKKOTTAI</Fit></span>
            </h2>
            <button className="-mt-[5px] flex h-[30px] w-[29px] items-center justify-center bg-[#f3f3f3]">
              <svg viewBox="0 0 12 12" className="h-3 w-3"><path d="m1 1 10 10M11 1 1 11" stroke="#111" strokeWidth="1.6" /></svg>
            </button>
          </div>
          <Chart />
        </main>
      </div>
    </div>
  );
}
